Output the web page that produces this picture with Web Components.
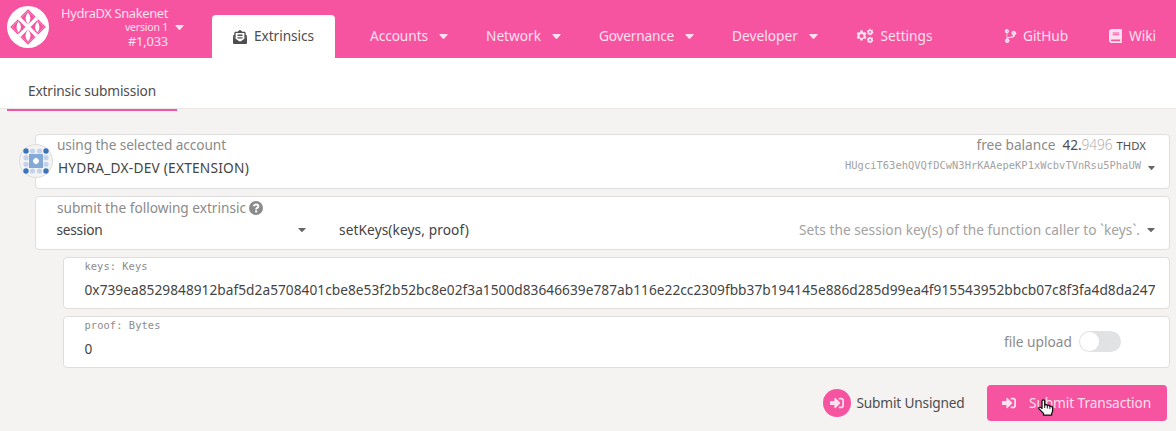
<!DOCTYPE html>
<html lang="en">
<head>
<meta charset="utf-8">
<title>Extrinsics</title>
<style>
html,body{margin:0;height:100%;overflow:hidden}
body{background:#f4f3f2;color:#4e4e4e;font:13.7px/20px "Noto Sans","Open Sans",sans-serif}
</style>
</head>
<body>
<extrinsics-page></extrinsics-page>
<script>
const define=(name,html,init)=>customElements.define(name,class extends HTMLElement{
  constructor(){super();this.attachShadow({mode:'open'}).innerHTML=html;}
  connectedCallback(){if(init)init.call(this,this.shadowRoot);}
});

/* A line of text tracked to fill the width given in "w". */
define('ui-text',`<style>:host{display:block;flex:none;white-space:pre}span{display:inline-block}</style><span><slot></slot></span>`,function(root){
  const w=+this.getAttribute('w'),s=root.querySelector('span');
  this.style.width=w+'px';
  s.style.letterSpacing=((w-s.getBoundingClientRect().width)/this.textContent.length)+'px';
});

const icons={
  envelope:['0 0 512 512','<path d="M176 216h160c9 0 16-7 16-16v-16c0-9-7-16-16-16H176c-9 0-16 7-16 16v16c0 9 7 16 16 16zm-16 80c0 9 7 16 16 16h160c9 0 16-7 16-16v-16c0-9-7-16-16-16H176c-9 0-16 7-16 16v16zm96 121c-16 0-33-5-47-15L0 250v214c0 27 21 48 48 48h416c27 0 48-21 48-48V250L303 402c-14 10-31 15-47 15zm237-225c-8-6-15-12-29-22V112c0-27-21-48-48-48h-78C323 52 285 0 256 0s-67 52-82 64H96c-27 0-48 21-48 48v58c-14 10-21 16-29 22C7 201 0 216 0 231v10l96 70V112h320v199l96-70v-10c0-15-7-30-19-39z"/>'],
  gears:['0 0 640 512','<path fill-rule="evenodd" d="M162 50h84l9 56 34 20 52-20 42 75-41 35v40l41 35-42 75-52-20-34 20-9 56h-84l-10-56-34-20-51 20-42-75 40-35v-40l-40-35 42-75 51 20 34-20zM204 182a74 74 0 1 0 0 148 74 74 0 0 0 0-148z"/><g fill="none" stroke="currentColor" stroke-width="62"><circle cx="516" cy="112" r="66"/><circle cx="516" cy="400" r="66"/></g><g fill="none" stroke="currentColor" stroke-width="44" stroke-dasharray="50 50.500"><circle cx="516" cy="112" r="96"/><circle cx="516" cy="400" r="96"/></g>'],
  branch:['0 0 384 512','<path d="M384 144c0-44-36-80-80-80s-80 36-80 80c0 36 24 67 58 77-1 16-4 28-12 36-18 19-56 23-97 27-32 3-64 6-93 17V155c35-10 60-39 60-75 0-44-36-80-80-80S-4 36-4 80c0 36 24 67 58 77v198c-34 10-58 41-58 77 0 44 36 80 80 80s80-36 80-80c0-33-20-61-48-73 4-8 10-14 19-19 14-7 37-9 60-12 47-4 100-9 134-44 16-17 25-40 26-66 31-11 53-40 53-74zM80 64a16 16 0 1 1 0 32 16 16 0 0 1 0-32zm0 384a16 16 0 1 1 0-32 16 16 0 0 1 0 32zm224-320a16 16 0 1 1 0 32 16 16 0 0 1 0-32z"/>'],
  book:['0 0 448 512','<path fill-rule="evenodd" d="M448 360V24c0-13-11-24-24-24H96C43 0 0 43 0 96v320c0 53 43 96 96 96h328c13 0 24-11 24-24v-16c0-8-4-14-9-19-4-15-4-59 0-74 5-4 9-11 9-19zM128 134c0-3 3-6 6-6h212c3 0 6 3 6 6v20c0 3-3 6-6 6H134c-3 0-6-3-6-6zm0 64c0-3 3-6 6-6h212c3 0 6 3 6 6v20c0 3-3 6-6 6H134c-3 0-6-3-6-6zm253 250H96c-18 0-32-14-32-32s14-32 32-32h285c-2 17-2 47 0 64z"/>'],
  signin:['0 0 512 512','<path d="M416 448h-84c-7 0-12-5-12-12v-40c0-7 5-12 12-12h84c18 0 32-14 32-32V160c0-18-14-32-32-32h-84c-7 0-12-5-12-12V76c0-7 5-12 12-12h84c53 0 96 43 96 96v192c0 53-43 96-96 96zM369 239 201 71c-15-15-41-4-41 17v96H24c-13 0-24 11-24 24v96c0 13 11 24 24 24h136v96c0 22 26 32 41 17l168-168c9-9 9-25 0-34z"/>'],
  caret:['0 0 10 5','<path d="M1 0h8q1 .2.4 1L5.6 4.7q-.6.5-1.2 0L.6 1Q0 .2 1 0z"/>'],
  help:['0 0 14 14','<circle cx="7" cy="7" r="7"/><path fill="none" stroke="#fff" stroke-width="1.9" d="M4.7 5.3C5 3.9 6 3.5 7 3.5c1.300 0 2.400.8 2.400 1.900 0 1.500-2.300 1.500-2.300 3"/><circle cx="7.100" cy="10.500" r="1.150" fill="#fff"/>'],
  hydra:['0 0 42 42','<circle cx="21" cy="21" r="21" fill="#fff"/><path fill="none" stroke="#f653a1" stroke-width="1.200" d="M21 4 38 21 21 38 4 21z"/><g fill="#f653a1"><path d="M21 5 29.500 13.500Q27 18 21 19 15 18 12.500 13.500z"/><path d="M21 37 29.500 28.500Q27 24 21 23 15 24 12.500 28.500z"/><path d="M5 21 13.500 12.500Q18 15 19 21 18 27 13.500 29.500z"/><path d="M37 21 28.500 12.500Q24 15 23 21 24 27 28.500 29.500z"/></g><g fill="#fff"><path d="M21 6.500Q26 12 21 18.500 16 12 21 6.500zM21 35.500Q26 30 21 23.500 16 30 21 35.500z"/><path d="M11.500 15.500Q16.500 21 11.500 26.500 7.500 21 11.500 15.500zM30.500 15.500Q25.500 21 30.500 26.500 34.500 21 30.500 15.500z"/></g><path stroke="#fff" stroke-width="3.600" d="M12 12 30 30M30 12 12 30"/>'],
  hand:['0 0 16 18','<path fill="#fff" stroke="#111" stroke-width="1.300" stroke-linejoin="round" d="M4 10V2.300C4 .5 6.700.5 6.700 2.300V6.500C7.500 5.500 9.200 5.900 9.300 7 10.200 6.200 11.600 6.700 11.800 7.800 13 7.200 14.600 7.900 14.600 9.500V13L13.600 15.500V17H5.500V15.300L1 10.500C.2 9 1.800 8 3 9z"/><path stroke="#111" d="M6.700 6v3.500M9.300 7v3M11.900 8v2.500"/>']
};
icons.ident=['0 0 34 34','<circle cx="17" cy="17" r="16.500" fill="#f4f3f2" stroke="#dddcdc"/><g fill="#c2d4ec"><circle cx="13.500" cy="7" r="2.600"/><circle cx="20.500" cy="7" r="2.600"/><circle cx="13.500" cy="27" r="2.600"/><circle cx="20.500" cy="27" r="2.600"/><circle cx="7" cy="13.700" r="2.600"/><circle cx="7" cy="20.300" r="2.600"/><circle cx="27" cy="13.700" r="2.600"/><circle cx="27" cy="20.300" r="2.600"/></g><g fill="#3b74bb"><circle cx="7" cy="7" r="2.700"/><circle cx="27" cy="7" r="2.700"/><circle cx="7" cy="27" r="2.700"/><circle cx="27" cy="27" r="2.700"/></g><path fill="#84a9d7" d="M10 10h14v14H10z"/><path fill="#fff" d="M17 13.500 20.200 17 17 20.500 13.800 17z"/><circle cx="17" cy="17" r="2.700" fill="#fff"/>'];

define('ui-icon','<style>:host{display:block;flex:none}div{height:100%}svg{display:block;width:100%;height:100%;overflow:visible}</style><div></div>',function(root){
  const [box,body]=icons[this.getAttribute('name')];
  this.style.width=this.getAttribute('w')+'px';
  this.style.height=this.getAttribute('h')+'px';
  root.querySelector('div').innerHTML=`<svg viewBox="${box}" fill="currentColor" preserveAspectRatio="none">${body}</svg>`;
});

define('chain-info',`<style>
:host{display:flex;width:212px;height:58px;box-sizing:border-box;padding-left:7px}
.logo{margin-top:6px}
.names{display:flex;flex-direction:column;align-items:flex-end;width:119px;line-height:14px;font-size:12.900px;padding-top:6px}
.names .v{font-size:10.500px;line-height:15px}
.names .b{line-height:12px}
.caret{margin:25px 0 0 7px}
</style>
<ui-icon class="logo" name="hydra" w="42" h="42"></ui-icon>
<div class="names"><ui-text w="107">HydraDX Snakenet</ui-text><ui-text class="v" w="43">version 1</ui-text><ui-text class="b" w="40">#1,033</ui-text></div>
<ui-icon class="caret" name="caret" w="9" h="5"></ui-icon>`);

define('nav-item',`<style>
:host{display:flex;align-items:center;height:43px;box-sizing:border-box;flex:none;padding-bottom:1px}
:host([active]){background:#fff;color:#4e4e4e;border-radius:4px 4px 0 0;width:123px;padding-left:21px}
::slotted(ui-icon[name=caret]){margin-left:11px}
</style><slot></slot>`);

define('app-header',`<style>
:host{display:flex;height:58px;background:#f653a1;color:#fee0ee}
nav{display:flex;padding-top:15px;width:964px}
ui-text+ui-icon{margin-top:1px}
.i{margin-right:7px}
</style><chain-info></chain-info>
<nav>
<nav-item active><ui-icon name="envelope" class="i" style="margin-top:2px" w="14" h="14"></ui-icon><ui-text w="60">Extrinsics</ui-text></nav-item>
<nav-item style="margin-left:35px"><ui-text w="58">Accounts</ui-text><ui-icon name="caret" w="9" h="5"></ui-icon></nav-item>
<nav-item style="margin-left:38px"><ui-text w="55">Network</ui-text><ui-icon name="caret" w="9" h="5"></ui-icon></nav-item>
<nav-item style="margin-left:38px"><ui-text w="75">Governance</ui-text><ui-icon name="caret" w="9" h="5"></ui-icon></nav-item>
<nav-item style="margin-left:38px"><ui-text w="66">Developer</ui-text><ui-icon name="caret" w="9" h="5"></ui-icon></nav-item>
<nav-item style="margin-left:38px"><ui-icon name="gears" class="i" w="17.500" h="14"></ui-icon><ui-text w="52">Settings</ui-text></nav-item>
<nav-item style="margin-left:auto"><ui-icon name="branch" class="i" w="11" h="14"></ui-icon><ui-text w="45">GitHub</ui-text></nav-item>
<nav-item style="margin:0 20px 0 41px"><ui-icon name="book" class="i" w="13" h="14"></ui-icon><ui-text w="27">Wiki</ui-text></nav-item>
</nav>`);

define('tab-bar',`<style>
:host{display:flex;height:50px;background:#fff;border-bottom:1px solid #e8e7e6;padding-left:7px}
div{width:149px;height:28px;padding:23px 0 0 21px;border-bottom:2px solid #f653a1;flex:none}
</style><div><slot></slot></div>`);

define('ui-card',`<style>
:host{display:block;box-sizing:border-box;background:#fff;border:1px solid #dedede;border-radius:4px;margin:0 6px 7px 35px;height:55px}
:host([nested]){margin-left:63px;height:52px}
</style><slot></slot>`);

define('toggle-switch',`<style>
:host{display:block;width:42px;height:21px;border-radius:11px;background:#e1e2e3;box-sizing:border-box;padding:1px}
i{display:block;width:19px;height:19px;border-radius:50%;background:#fff}
</style><i></i>`);

define('account-card',`<style>
:host{display:block}
ui-card{position:relative}
.id{position:absolute;left:-17px;top:9px}
.r{display:flex;padding-left:21px;color:#8b8b8b}
.bal{margin-left:auto}
.n{color:#4e4e4e;margin-left:7px}
.d{font-family:"Open Sans","Noto Sans",sans-serif;font-weight:300;color:#aaa}
.u{font-size:11.300px;line-height:21px;color:#4e4e4e;margin:0 23px 0 4px}
.b{padding-left:22px;color:#444;margin-top:2px}
.a{font:10.400px/20px "DejaVu Sans Mono","Liberation Mono",monospace;color:#a2a2a2;margin:-3px 7px 0 auto}
.c{margin:8px 14px 0 0;color:#666}
</style><ui-card><ui-icon class="id" name="ident" w="34" h="34"></ui-icon>
<div class="r"><ui-text w="169">using the selected account</ui-text><ui-text class="bal" w="79">free balance</ui-text><ui-text class="n" w="19">42.</ui-text><ui-text class="d" w="31">9496</ui-text><ui-text class="u" w="29.500">THDX</ui-text></div>
<div class="r b"><ui-text w="191">HYDRA_DX-DEV (EXTENSION)</ui-text><ui-text class="a" w="296">HUgciT63ehQVQfDCwN3HrKAAepeKP1xWcbvTVnRsu5PhaUW</ui-text><ui-icon class="c" name="caret" w="7" h="4"></ui-icon></div></ui-card>`);

define('extrinsic-card',`<style>
:host{display:block}ui-card{height:54px}
.r{display:flex;align-items:center;padding-left:21px;color:#8b8b8b;height:20px;padding-top:1px}
.q{margin-left:3px}
.c{color:#666;margin-right:14px}
.b{padding:2px 0 0 20.500px;color:#444}
</style><ui-card>
<div class="r"><ui-text w="189">submit the following extrinsic</ui-text><ui-icon class="q" name="help" w="14" h="14"></ui-icon></div>
<div class="r b"><ui-text w="46">session</ui-text><ui-icon class="c" style="margin:0 33.500px 0 195px" name="caret" w="8" h="4"></ui-icon><ui-text w="130">setKeys(keys, proof)</ui-text><ui-text style="margin:0 7px 0 auto;color:#a2a2a2" w="341">Sets the session key(s) of the function caller to \`keys\`.</ui-text><ui-icon class="c" name="caret" w="8" h="4"></ui-icon></div></ui-card>`);

define('param-field',`<style>
:host{display:block}
.w{display:flex;justify-content:space-between;padding-left:20.500px}
.l{font:10.400px/14px "DejaVu Sans Mono","Liberation Mono",monospace;color:#8b8b8b;padding-top:1px}
.v{color:#444;margin-top:7px}
</style><ui-card nested><div class="w"><div><div class="l"><slot name="label"></slot></div><div class="v"><slot name="value"></slot></div></div><slot name="side"></slot></div></ui-card>`);

define('action-bar',`<style>
:host{display:flex;align-items:center;height:36px;margin:17px 9px 0 0;justify-content:flex-end}
.o{display:flex;align-items:center;justify-content:center;width:28px;height:28px;border-radius:50%;background:#f653a1;color:#fee0ee;margin-right:5.500px}
.t{margin-right:22.500px}
.p{position:relative;box-sizing:border-box;display:flex;align-items:center;width:180px;height:36px;border-radius:4px;background:#f653a1;color:#fee0ee;padding-left:15px;gap:13px}
.h{position:absolute;left:51px;top:14px}
</style><span class="o"><ui-icon name="signin" w="14" h="14"></ui-icon></span><ui-text class="t" w="108">Submit Unsigned</ui-text>
<div class="p"><ui-icon name="signin" w="14" h="14"></ui-icon><ui-text w="122">Submit Transaction</ui-text><ui-icon class="h" name="hand" w="16" h="17"></ui-icon></div>`);

define('extrinsics-page',`<style>
:host{display:block}
main{padding-top:25px}
.side{display:flex;align-items:center;gap:7px;padding:7px 48px 0 0;color:#8b8b8b}
</style><app-header></app-header><tab-bar><ui-text w="128">Extrinsic submission</ui-text></tab-bar>
<main><account-card></account-card><extrinsic-card></extrinsic-card>
<param-field><ui-text slot="label" w="63">keys: Keys</ui-text><ui-text slot="value" w="1071">0x739ea8529848912baf5d2a5708401cbe8e53f2b52bc8e02f3a1500d83646639e787ab116e22cc2309fbb37b194145e886d285d99ea4f915543952bbcb07c8f3fa4d8da247</ui-text></param-field>
<param-field><ui-text slot="label" w="76">proof: Bytes</ui-text><ui-text slot="value" w="8">0</ui-text><div slot="side" class="side"><ui-text w="68">file upload</ui-text><toggle-switch></toggle-switch></div></param-field>
<action-bar></action-bar></main>`);
</script>
</body>
</html>
